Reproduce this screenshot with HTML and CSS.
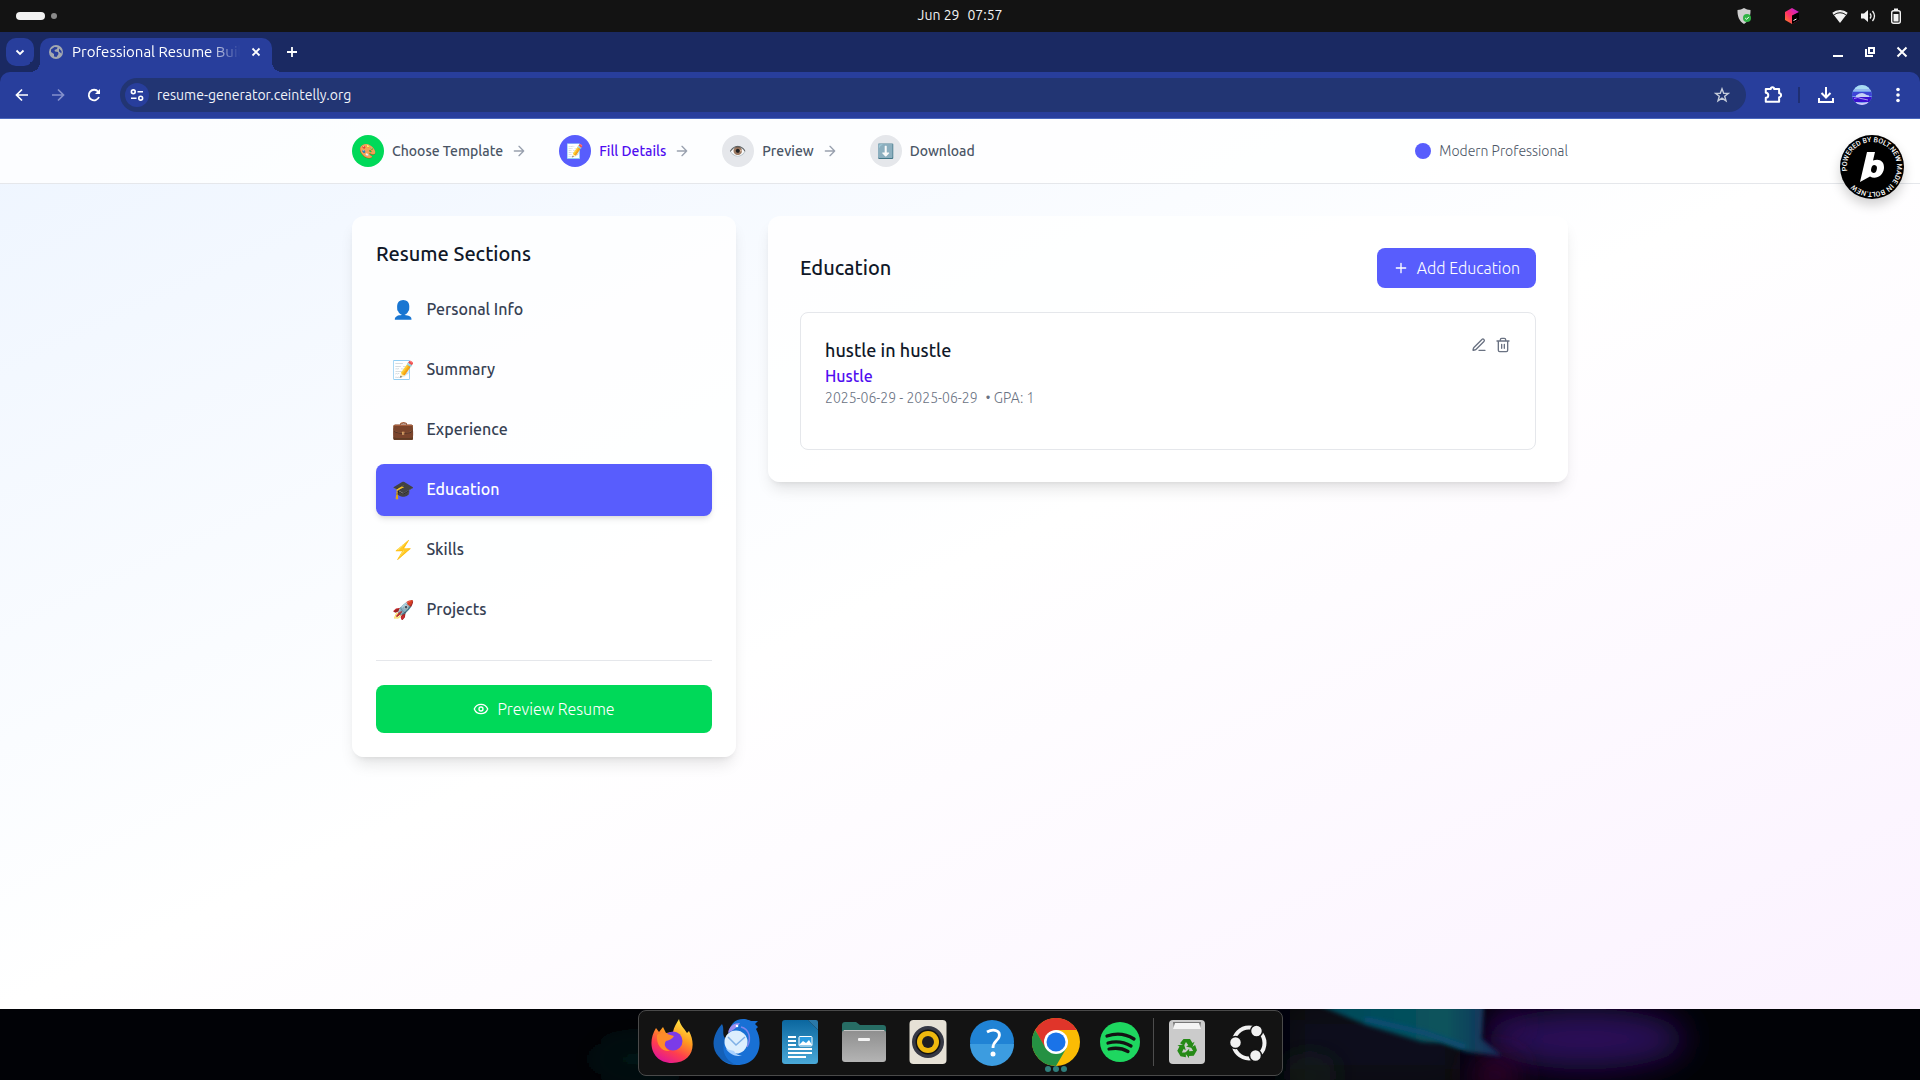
FILE: index.html
```html
<!DOCTYPE html>
<html lang="en">
<head>
<meta charset="utf-8">
<meta name="viewport" content="width=device-width, initial-scale=1">
<title>Professional Resume Builder</title>
<link rel="stylesheet" href="styles.css">
</head>
<body>
<div class="topbar">
  <div class="workspaces"><span class="ws-pill"></span><span class="ws-dot"></span></div>
  <div class="clock"><span>Jun 29</span><span>07:57</span></div>
  <div class="tray">
    <svg class="tray-app" width="16" height="16" viewBox="0 0 16 16"><path d="M8 0c2 1.400 4 1.800 6.500 2 .2 6-1.500 11-6.500 14C3 13 1.300 8 1.500 2 4 1.800 6 1.400 8 0z" fill="#cfcfcf"/><circle cx="11" cy="10" r="4" fill="#2fb344"/><path d="M9.200 10l1.400 1.300 2.300-2.400" stroke="#fff" fill="none"/></svg>
    <svg class="tray-cube" width="16" height="16" viewBox="0 0 16 16"><defs><linearGradient id="cube" x1="0" y1="1" x2="1" y2="0"><stop offset="0" stop-color="#ff8a1f"/><stop offset=".45" stop-color="#ff2d6b"/><stop offset="1" stop-color="#b01df0"/></linearGradient></defs><path d="M8 0l7 4v8l-7 4-7-4V4z" fill="url(#cube)"/><path d="M8 7.500l7-3.500v8l-7 4z" fill="#000"/><path d="M9.500 12.500l3-1.500" stroke="#fff"/></svg>
    <svg width="16" height="16" viewBox="0 0 16 16"><path d="M8 15L.7 5.500A12 12 0 0 1 15.300 5.500z" fill="#f2f2f2"/><path d="M.8 5.300A11.500 11.500 0 0 1 15.200 5.300" fill="none" stroke="#f2f2f2" stroke-width="1.500"/><path d="M2.200 6.700a9.500 9.500 0 0 1 11.600 0" fill="none" stroke="#131313"/></svg>
    <svg width="16" height="16" viewBox="0 0 16 16"><path d="M1 5.500h3L8 2v12l-4-3.500H1z" fill="#f2f2f2"/><path d="M10 5.500q2 2.500 0 5M12.500 3q4 5 0 10" fill="none" stroke="#f2f2f2" stroke-width="1.300"/></svg>
    <svg width="16" height="16" viewBox="0 0 16 16"><rect x="3.700" y="2.700" width="8.600" height="12.600" rx="2" fill="none" stroke="#f2f2f2" stroke-width="1.400"/><path d="M6 .5h4v1.500H6zM5.500 6h5v7.500h-5z" fill="#f2f2f2"/></svg>
  </div>
</div>

<div class="tabstrip">
  <button class="tab-search" aria-label="Search tabs"><svg width="16" height="16" viewBox="0 0 16 16"><path d="M4.500 6.500L8 10l3.500-3.500" fill="none" stroke="#fff" stroke-width="1.800"/></svg></button>
  <div class="tab">
    <svg width="14" height="14" viewBox="0 0 14 14"><circle cx="7" cy="7" r="7" fill="#a3a8b0"/><path d="M2 4.500L5.500 2l3 .2L8 4 5.500 5l.5 1.500 3 .5.500 2L7.500 12 5 11.500V9L2 7zM10 3.500l2.500 2.500v2.500L10 6.500z" fill="#2a3f9d"/></svg>
    <span class="tab-title">Professional Resume Builder</span>
    <button class="plain" aria-label="Close tab"><svg width="16" height="16" viewBox="0 0 16 16"><path d="M4.500 4.500l7 7M11.500 4.500l-7 7" stroke="#fff" stroke-width="1.800"/></svg></button>
  </div>
  <button class="plain new-tab" aria-label="New tab"><svg width="16" height="16" viewBox="0 0 16 16"><path d="M8 3v10M3 8h10" stroke="#fff" stroke-width="1.800"/></svg></button>
  <div class="window-buttons">
    <button class="plain" aria-label="Minimize"><svg width="16" height="16" viewBox="0 0 16 16"><path d="M3 12h10" stroke="#fff" stroke-width="2"/></svg></button>
    <button class="plain" aria-label="Restore"><svg width="16" height="16" viewBox="0 0 16 16"><path d="M7 4h5v5H7zM4 5v7h7" fill="none" stroke="#fff" stroke-width="2"/></svg></button>
    <button class="plain" aria-label="Close"><svg width="16" height="16" viewBox="0 0 16 16"><path d="M3.500 3.500l9 9M12.500 3.500l-9 9" stroke="#fff" stroke-width="2"/></svg></button>
  </div>
</div>

<div class="toolbar-wrap">
<div class="toolbar">
  <button class="tool" aria-label="Back"><svg width="16" height="16" viewBox="0 0 16 16"><path d="M14 8H3M8 2.500L2.500 8 8 13.500" fill="none" stroke="#fff" stroke-width="1.700"/></svg></button>
  <button class="tool" aria-label="Forward" disabled><svg width="16" height="16" viewBox="0 0 16 16"><path d="M2 8h11M8 2.500L13.500 8 8 13.500" fill="none" stroke="#8490cc" stroke-width="1.700"/></svg></button>
  <button class="tool" aria-label="Reload"><svg width="16" height="16" viewBox="0 0 16 16"><path d="M13 10a5.300 5.300 0 1 1-.8-5.300L13.500 6" fill="none" stroke="#fff" stroke-width="1.800"/><path d="M14 2v5H9z" fill="#fff"/></svg></button>
  <div class="omnibox">
    <button class="site-info" aria-label="View site information"><svg width="16" height="16" viewBox="0 0 16 16"><g fill="none" stroke="#fff" stroke-width="1.600"><circle cx="4.300" cy="4.800" r="1.900"/><path d="M8.500 4.800H14M2 11.200h5.500"/><circle cx="11.700" cy="11.200" r="1.900"/></g></svg></button>
    <input class="url" type="text" aria-label="Address" value="resume-generator.ceintelly.org">
    <button class="plain" aria-label="Bookmark this page"><svg width="16" height="16" viewBox="0 0 16 16"><path d="M8 1.800l1.700 4.400 4.600.2-3.600 2.900 1.300 4.500L8 11.200l-4 2.600 1.300-4.500L1.700 6.400l4.600-.2z" fill="none" stroke="#c4cbd9" stroke-width="1.400"/></svg></button>
  </div>
  <button class="tool ext" aria-label="Extensions"><svg width="20" height="20" viewBox="0 0 18 18"><path d="M2.500 3.500h4.500a1.500 1.500 0 0 1 3 0h4.500v4a1.500 1.500 0 0 1 0 3.500v4h-12v-3.500a2.200 2.200 0 0 0 0-4.500z" fill="none" stroke="#fff" stroke-width="1.800" stroke-linejoin="round"/></svg></button>
  <span class="tool-sep"></span>
  <button class="tool" aria-label="Downloads"><svg width="16" height="16" viewBox="0 0 16 16"><path d="M8 0v10M3.500 6L8 10.500 12.500 6M1 11v4h14v-4" fill="none" stroke="#fff" stroke-width="2"/></svg></button>
  <button class="tool" aria-label="Profile"><svg width="20" height="20" viewBox="0 0 20 20"><defs><clipPath id="av"><circle cx="10" cy="10" r="10"/></clipPath></defs><g clip-path="url(#av)"><path fill="#6f9bea" d="M0 0h20v20H0z"/><path fill="#a9dcf2" d="M3 0h14v4H3z"/><path d="M0 5h20" stroke="#b9d6f6"/><path fill="#3d44d6" d="M0 7h20v4H0z"/><path d="M4 10.500q5-3.500 8-2 3 2 5 2v2l-13 .5z" fill="#c4d0f6"/><path fill="#3a0fd0" d="M0 12h20v5H0z"/><path d="M2 13.500q4-2 7 0l7 1.500" stroke="#a79bf0" fill="none"/><path d="M4 17q6 2 12 0v3H4z" fill="#cfc6f8"/></g></svg></button>
  <button class="tool" aria-label="Menu"><svg width="16" height="16" viewBox="0 0 16 16" fill="#fff"><circle cx="8" cy="2.500" r="1.800"/><circle cx="8" cy="8" r="1.800"/><circle cx="8" cy="13.500" r="1.800"/></svg></button>
</div>
</div>

<div class="page">
  <header class="site-header">
    <div class="container header-row">
      <ol class="steps">
        <li class="step"><span class="step-icon done">🎨</span><span>Choose Template</span><svg class="arrow" viewBox="0 0 24 24"><path d="M5 12h14M12 5l7 7-7 7"/></svg></li>
        <li class="step current" aria-current="step"><span class="step-icon active">📝</span><span>Fill Details</span><svg class="arrow" viewBox="0 0 24 24"><path d="M5 12h14M12 5l7 7-7 7"/></svg></li>
        <li class="step"><span class="step-icon">👁️</span><span>Preview</span><svg class="arrow" viewBox="0 0 24 24"><path d="M5 12h14M12 5l7 7-7 7"/></svg></li>
        <li class="step"><span class="step-icon">⬇️</span><span>Download</span></li>
      </ol>
      <div class="template"><span class="template-dot"></span><span>Modern Professional</span></div>
    </div>
  </header>

  <main class="container layout">
    <aside class="card sidebar">
      <h2 class="title">Resume Sections</h2>
      <nav class="sections">
        <button class="section"><span class="emoji">👤</span>Personal Info</button>
        <button class="section"><span class="emoji">📝</span>Summary</button>
        <button class="section"><span class="emoji">💼</span>Experience</button>
        <button class="section selected"><span class="emoji">🎓</span>Education</button>
        <button class="section"><span class="emoji">⚡</span>Skills</button>
        <button class="section"><span class="emoji">🚀</span>Projects</button>
      </nav>
      <div class="sidebar-foot">
        <button class="btn preview"><svg class="icon" viewBox="0 0 24 24"><path d="M2.062 12.348a1 1 0 0 1 0-.696 10.750 10.750 0 0 1 19.876 0 1 1 0 0 1 0 .696 10.750 10.750 0 0 1-19.876 0"/><circle cx="12" cy="12" r="3"/></svg>Preview Resume</button>
      </div>
    </aside>

    <section class="card editor">
      <div class="editor-head">
        <h2 class="title">Education</h2>
        <button class="btn add"><svg class="icon" viewBox="0 0 24 24"><path d="M5 12h14M12 5v14"/></svg>Add Education</button>
      </div>
      <article class="entry">
        <div class="entry-text">
          <h3 class="entry-title">hustle in hustle</h3>
          <p class="entry-school">Hustle</p>
          <p class="entry-meta"><span>2025-06-29 - 2025-06-29</span><span>• GPA: 1</span></p>
        </div>
        <div class="entry-actions">
          <button class="plain" aria-label="Edit"><svg class="icon" viewBox="0 0 24 24"><path d="M12 20h9M16.376 3.622a1 1 0 0 1 3.002 3.002L7.368 18.635a2 2 0 0 1-.855.506l-2.872.838a.5.500 0 0 1-.620-.620l.838-2.872a2 2 0 0 1 .506-.854z"/></svg></button>
          <button class="plain" aria-label="Delete"><svg class="icon" viewBox="0 0 24 24"><path d="M3 6h18M19 6v14c0 1-1 2-2 2H7c-1 0-2-1-2-2V6M8 6V4c0-1 1-2 2-2h4c1 0 2 1 2 2v2M10 11v6M14 11v6"/></svg></button>
        </div>
      </article>
    </section>
  </main>

  <a class="badge" href="#" aria-label="Bolt">
    <svg width="64" height="64" viewBox="0 0 64 64"><circle cx="32" cy="32" r="32"/><path id="ring" d="M7.300 36A25 25 0 0 1 56.700 28A25 25 0 0 1 7.300 36" fill="none"/><text class="ring-text"><textPath href="#ring">POWERED BY BOLT.NEW MADE IN BOLT.NEW</textPath></text><path d="M27 17h8l-2 8.500c6-2.500 11.500.5 11 7.500-.6 8-8.500 12-14 8.500L20 47z" fill="#fff"/><ellipse cx="34" cy="34" rx="2.800" ry="4" transform="rotate(15 34 34)"/></svg>
  </a>
</div>

<footer class="desktop">
  <svg class="wallpaper" viewBox="0 0 1920 71" preserveAspectRatio="xMidYMid slice"><defs><filter id="b1"><feGaussianBlur stdDeviation="2"/></filter><filter id="b2" x="-100%" y="-100%" width="300%" height="300%"><feGaussianBlur stdDeviation="16"/></filter><linearGradient id="leaf" x1="0" x2="1"><stop offset="0" stop-color="#06485a"/><stop offset=".7" stop-color="#07535c"/><stop offset="1" stop-color="#1c2c5a"/></linearGradient></defs><path fill="#010206" d="M0 0h1920v71H0z"/><ellipse cx="640" cy="50" rx="50" ry="20" fill="#031413" filter="url(#b2)"/><path d="M1290 0h170v71h-170z" fill="#07101a" filter="url(#b2)"/><ellipse cx="1585" cy="30" rx="100" ry="30" fill="#2c1158" filter="url(#b2)"/><ellipse cx="1310" cy="66" rx="24" ry="12" fill="#1a2a1c" filter="url(#b2)"/><ellipse cx="1495" cy="66" rx="24" ry="18" fill="#3a0430" filter="url(#b2)"/><path d="M1318-4h166l-2 34 20 17-35-4-25-9-20-1-56-17z" fill="url(#leaf)" filter="url(#b1)"/><path d="M1365 10l60 14 40 14" stroke="#0a4c74" stroke-width="5" fill="none" filter="url(#b1)"/><ellipse cx="1508" cy="14" rx="12" ry="10" fill="#3d1568" filter="url(#b2)"/></svg>
  <nav class="dock" aria-label="Dock">
    <div class="dock-apps">
      <button class="app" aria-label="Firefox"><svg viewBox="0 0 48 48"><defs><linearGradient id="ff" x1=".8" y1="0" x2=".3" y2="1"><stop offset="0" stop-color="#fff14a"/><stop offset=".4" stop-color="#ff9a1e"/><stop offset=".7" stop-color="#ff3f4d"/><stop offset="1" stop-color="#e0149a"/></linearGradient></defs><path d="M8 10l3 4 4-5 3 6 7-1c1-5 3-8 6-13 1 6 5 9 8 14l2-2c8 15 3 32-17 32C5 45-2 26 8 10z" fill="url(#ff)"/><circle cx="25" cy="23" r="9.500" fill="#7b3be8"/><path d="M9 17c5-4 9-1 17 1-2 3-4 4-8 5-3 4 0 8 4 10-8 1-14-6-13-16z" fill="#ff8b2a"/></svg></button>
      <button class="app" aria-label="Thunderbird"><svg viewBox="0 0 48 48"><path d="M16 20C17 6 23 1 31 1c5 0 7 2 9 2h6l-3 3 3 3-2 2c8 14 3 36-19 36C10 47 2 37 7 24z" fill="#1870d5"/><path d="M10 6C-3 20-3 42 24 47 11 41 9 30 14 21 9 17 13 11 10 6z" fill="#1460b8"/><path d="M16 15c1-7 6-10 12-10-3 4-6 7-12 10z" fill="#9a8df0"/><path d="M29 9c8 2 11 11 6 20" stroke="#7d84ec" stroke-width="1.500" fill="none"/><circle cx="24" cy="24" r="11.500" fill="#dceefd"/><path d="M16 19l8 8 9-8" stroke="#7fb0e6" stroke-width="1.500" fill="none"/><path d="M14 31c5 7 11 7 16 7-5-1-7-3-8-5z" fill="#a9d2ff"/><circle cx="25" cy="8" r="1.300" fill="#fff"/></svg></button>
      <button class="app" aria-label="Writer"><svg viewBox="0 0 48 48"><defs><linearGradient id="wr" x1="0" y1="0" x2="0" y2="1"><stop offset="0" stop-color="#0b679f"/><stop offset="1" stop-color="#4aa9d8"/></linearGradient></defs><path d="M9 2h23l10 10v31a3 3 0 0 1-3 3H9a3 3 0 0 1-3-3V5a3 3 0 0 1 3-3z" fill="url(#wr)"/><path d="M32 2h8a2 2 0 0 1 2 2v8z" fill="#2a78a8"/><path d="M12 19h8M12 23h8M12 27h8M12 31h24M12 35h24M12 39h18" stroke="#fff" stroke-width="2"/><rect x="23" y="18.500" width="13" height="9.500" rx="1" fill="#2a9be0" stroke="#fff"/><path d="M23 27l4-4 3 2 3-3 3 5z" fill="#fff"/></svg></button>
      <button class="app" aria-label="Files"><svg viewBox="0 0 48 48"><defs><linearGradient id="fl" x1="0" y1="0" x2="0" y2="1"><stop offset="0" stop-color="#8e8e8e"/><stop offset="1" stop-color="#b4b4b4"/></linearGradient></defs><path d="M2 7a3 3 0 0 1 3-3h11l4 3h23a3 3 0 0 1 3 3v12H2z" fill="#276d64"/><rect x="2" y="12" width="44" height="32" rx="3" fill="url(#fl)"/><path d="M4 12.500h40" stroke="#c8c8c8"/><rect x="18" y="20" width="12" height="3" rx="1" fill="#f4f4f4"/></svg></button>
      <button class="app" aria-label="Rhythmbox"><svg viewBox="0 0 48 48"><rect x="5.500" y="2" width="37" height="44" rx="4" fill="#e6e1d6"/><circle cx="24" cy="24" r="16" fill="#363844"/><circle cx="24" cy="24" r="12.500" fill="#111"/><circle cx="24" cy="24" r="11" fill="#eeb80e"/><circle cx="24" cy="24" r="6" fill="#1d1d22"/></svg></button>
      <button class="app" aria-label="Help"><svg viewBox="0 0 48 48"><circle cx="24" cy="24" r="22" fill="#2083d5"/><path d="M2 26a22 22 0 0 0 44 0z" fill="#3c9ce0"/><path d="M19 14c7-4 14-1 12 5-1 4-6 4-6 11" stroke="#fff" stroke-width="2.800" fill="none"/><circle cx="25" cy="36" r="2.500" fill="#fff"/></svg></button>
      <button class="app" aria-label="Chrome"><svg viewBox="0 0 48 48"><circle cx="24" cy="24" r="24" fill="#fbbc04"/><path d="M24 24L13 30 3.200 12A24 24 0 0 1 44.800 12H24z" fill="#e0352a"/><path d="M3.200 12A24 24 0 0 0 24 48l10.500-18L24 24 13.500 30z" fill="#259143"/><circle cx="24" cy="24" r="12" fill="#fff"/><circle cx="24" cy="24" r="9.500" fill="#1a73e8"/></svg><span class="running"><i></i><i></i><i></i></span></button>
      <button class="app" aria-label="Spotify"><svg viewBox="0 0 48 48"><circle cx="24" cy="24" r="20" fill="#1ed760"/><path d="M11 18c9-3 19-2 27 3M12 25c8-2 16-1 23 3M13 31c7-1.500 13-1 19 2.500" stroke="#131313" stroke-width="3.300" stroke-linecap="round" fill="none"/></svg></button>
    </div>
    <span class="dock-sep"></span>
    <div class="dock-places">
      <button class="app" aria-label="Trash"><svg viewBox="0 0 48 48"><rect x="6" y="2" width="36" height="44" rx="4" fill="#cbcbcb"/><path d="M10 4h28l-1 7H11z" fill="#777"/><path d="M12 5h24l2 6H10z" fill="#f4f4f4"/><g fill="#258a16"><g id="arm"><path d="M20.500 21h6.500l2.500 4 2-1.200-2.500 6.200-6-1.500 2.300-1.200-2.300-3.300-2 3.500-4-2.300z"/></g><use href="#arm" transform="rotate(120 24 30.500)"/><use href="#arm" transform="rotate(240 24 30.500)"/></g></svg></button>
      <button class="app" aria-label="Show apps"><svg viewBox="0 0 48 48"><circle cx="25" cy="25" r="15.500" fill="none" stroke="#f2f2f2" stroke-width="4"/><g fill="#f2f2f2" stroke="#131313" stroke-width="1.500"><circle cx="32.500" cy="13" r="6"/><circle cx="11.500" cy="24.500" r="6"/><circle cx="31.500" cy="37.500" r="6"/></g></svg></button>
    </div>
  </nav>
</footer>
</body>
</html>
```
FILE: styles.css
```css
* { box-sizing: border-box; }

body {
  margin: 0;
  min-height: 100vh;
  display: flex;
  flex-direction: column;
  font-family: Ubuntu, "Open Sans", "Noto Color Emoji", sans-serif;
  font-size: 16px;
  line-height: 24px;
  font-weight: 300;
  color: #101828;
  background: #010206;
}

button, input {
  font: inherit;
  color: inherit;
  border: 0;
  margin: 0;
  padding: 0;
  background: none;
}

button { cursor: pointer; }
svg { display: block; flex: none; }
h2, h3, p, ol { margin: 0; padding: 0; }

.plain { display: flex; }

/* Desktop top bar */
.topbar {
  display: grid;
  grid-template-columns: 1fr auto 1fr;
  align-items: center;
  height: 32px;
  padding: 0 16px;
  background: #131313;
  color: #f2f2f2;
}
.workspaces { display: flex; align-items: center; gap: 6px; }
.ws-pill { width: 29px; height: 8px; border-radius: 4px; background: #f2f2f2; }
.ws-dot { width: 6px; height: 6px; border-radius: 50%; background: #8a8a8a; }
.clock { display: flex; gap: 8px; padding-bottom: 2px; font-size: 14px; font-weight: 400; }
.tray { display: flex; justify-content: flex-end; gap: 12px; }
.tray-app, .tray-cube { margin-right: 20px; }

/* Browser window */
.tabstrip {
  display: flex;
  align-items: center;
  height: 40px;
  padding: 0 10px 0 6px;
  background: #1a2962;
}
.tab-search {
  display: grid;
  place-items: center;
  width: 28px;
  height: 28px;
  border-radius: 10px;
  background: #283e9c;
}
.tab {
  position: relative;
  align-self: flex-end;
  display: flex;
  align-items: center;
  width: 232px;
  height: 34px;
  margin-left: 6px;
  padding: 0 8px 6px 9px;
  border-radius: 10px 10px 0 0;
  background: #283e9c;
  color: #fff;
}
.tab::before, .tab::after {
  content: "";
  position: absolute;
  bottom: 0;
  width: 10px;
  height: 10px;
}
.tab::before { left: -10px; background: radial-gradient(circle at 0 0, #1a2962 10px, #283e9c 10px); }
.tab::after { right: -10px; background: radial-gradient(circle at 100% 0, #1a2962 10px, #283e9c 10px); }
.tab-title {
  flex: 1;
  margin: 0 8px 0 9px;
  overflow: hidden;
  white-space: nowrap;
  font-size: 15px;
  font-weight: 400;
  -webkit-mask-image: linear-gradient(to right, #000 136px, transparent 168px);
  mask-image: linear-gradient(to right, #000 136px, transparent 168px);
}
.new-tab { margin-left: 12px; }
.window-buttons { display: flex; gap: 16px; margin-left: auto; }
.toolbar-wrap { background: #1a2962; }
.toolbar {
  display: flex;
  align-items: center;
  height: 47px;
  padding: 0 4px;
  border-bottom: 1px solid #4a68bd;
  border-radius: 10px 10px 0 0;
  background: #283e9c;
}
.tool { display: grid; place-items: center; width: 36px; height: 36px; }
.ext { margin-left: 9px; }
.tool-sep { width: 2px; height: 16px; margin: 0 8px 0 7px; background: #1f2f72; }
.omnibox {
  flex: 1;
  display: flex;
  align-items: center;
  gap: 8px;
  height: 34px;
  margin-left: 8px;
  padding: 0 16px 0 5px;
  border-radius: 17px;
  background: #223573;
}
.site-info {
  display: grid;
  place-items: center;
  width: 24px;
  height: 24px;
  border-radius: 50%;
  background: #283e9c;
}
.url { flex: 1; min-width: 0; font-size: 14px; font-weight: 400; color: #f1f3fa; outline: 0; }

/* Resume builder page */
.page {
  position: relative;
  flex: 1;
  background: linear-gradient(to bottom right, #eef5ff, #fff, #fbf2ff);
}
.container { width: 100%; max-width: 1280px; margin: 0 auto; padding: 0 32px; }
.site-header { border-bottom: 1px solid #e5e7eb; background: rgba(255, 255, 255, .8); }
.header-row {
  display: flex;
  justify-content: space-between;
  align-items: center;
  padding-top: 16px;
  padding-bottom: 16px;
  font-size: 14px;
  line-height: 20px;
}
.steps { display: flex; gap: 32px; list-style: none; }
.step { display: flex; align-items: center; gap: 8px; font-weight: 500; color: #4a5565; }
.current { color: #4f0df0; }
.step-icon {
  display: grid;
  place-items: center;
  width: 32px;
  height: 32px;
  border-radius: 50%;
  background: #e5e7eb;
}
.done { background: #00d959; }
.active { background: #585dfd; }
.arrow { width: 16px; height: 16px; fill: none; stroke: #99a1af; stroke-width: 2; stroke-linecap: round; stroke-linejoin: round; }
.template { display: flex; align-items: center; gap: 8px; color: #4a5565; }
.template-dot { width: 16px; height: 16px; border-radius: 50%; background: #585dfd; }

.layout {
  display: grid;
  grid-template-columns: minmax(0, 384fr) minmax(0, 800fr);
  column-gap: 32px;
  align-items: start;
  padding-top: 32px;
  padding-bottom: 32px;
}
.card {
  border-radius: 12px;
  background: rgba(255, 255, 255, .8);
  box-shadow: 0 10px 15px -3px rgba(0, 0, 0, .1), 0 4px 6px -4px rgba(0, 0, 0, .1);
}
.title { font-size: 20px; line-height: 28px; font-weight: 500; }
.sidebar { padding: 24px; }
.sections { display: flex; flex-direction: column; gap: 8px; margin-top: 16px; }
.section {
  display: flex;
  align-items: center;
  gap: 12px;
  padding: 11px 16px 13px;
  border-radius: 8px;
  font-weight: 500;
  color: #364153;
  text-align: left;
}
.selected {
  background: #585dfd;
  color: #fff;
  box-shadow: 0 4px 6px -1px rgba(0, 0, 0, .1), 0 2px 4px -2px rgba(0, 0, 0, .1);
}
.emoji { font-size: 18px; line-height: 28px; }
.sidebar-foot { margin-top: 24px; padding-top: 24px; border-top: 1px solid #e5e7eb; }
.btn {
  display: flex;
  align-items: center;
  justify-content: center;
  gap: 8px;
  border-radius: 8px;
  color: #fff;
}
.icon { width: 16px; height: 16px; fill: none; stroke: currentColor; stroke-width: 2; stroke-linecap: round; stroke-linejoin: round; }
.preview { width: 100%; padding: 12px 16px; background: #00d959; }
.add { padding: 8px 16px; background: #585dfd; }

.editor { padding: 32px; }
.editor-head { display: flex; justify-content: space-between; align-items: center; }
.entry {
  display: flex;
  justify-content: space-between;
  align-items: flex-start;
  margin-top: 24px;
  padding: 23px 24px 41px;
  border: 1px solid #e5e7eb;
  border-radius: 8px;
  background: rgba(255, 255, 255, .5);
}
.entry-title { font-size: 18px; line-height: 28px; font-weight: 500; }
.entry-school { font-weight: 500; color: #4f0df0; }
.entry-meta { display: flex; gap: 8px; font-size: 14px; line-height: 20px; color: #6a7282; }
.entry-actions { display: flex; gap: 8px; padding-top: 1px; color: #6a7282; }

.badge {
  position: absolute;
  top: 16px;
  right: 16px;
  border-radius: 50%;
  box-shadow: 0 6px 12px rgba(0, 0, 0, .18);
}
.ring-text { font: 500 7px Roboto, sans-serif; fill: #fff; }

/* Desktop and dock */
.desktop { position: relative; display: flex; justify-content: center; padding: 1px 0 4px; }
.wallpaper { position: absolute; inset: 0; width: 100%; height: 100%; }
.dock {
  position: relative;
  display: flex;
  align-items: center;
  height: 66px;
  padding: 0 10px 2px 9px;
  border: 1px solid #4a4a4a;
  border-radius: 8px;
  background: #131313;
}
.dock-apps { display: flex; gap: 16px; }
.dock-places { display: flex; gap: 13px; }
.dock-sep { width: 1px; height: 48px; margin: 0 9px; background: #4d4d4d; }
.app { position: relative; width: 48px; height: 48px; }
.app svg { width: 48px; height: 48px; }
.running { position: absolute; bottom: -6px; left: 0; right: 0; display: flex; justify-content: center; gap: 2px; }
.running i { width: 6px; height: 6px; border-radius: 50%; background: #2f7f7c; }
```
